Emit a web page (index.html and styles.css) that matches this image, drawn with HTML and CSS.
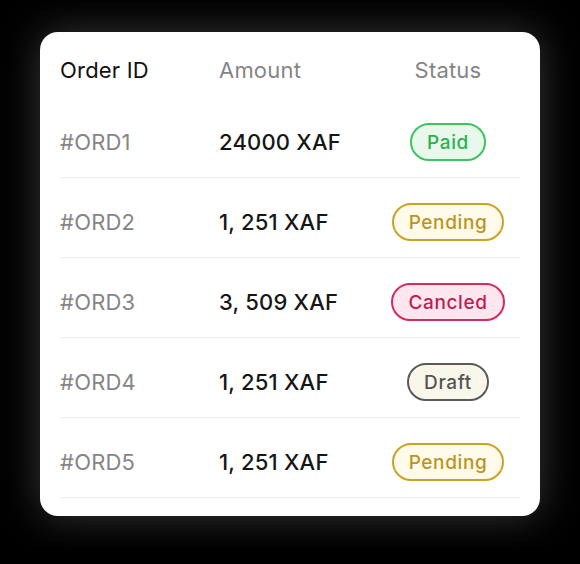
FILE: index.html
```html
<!DOCTYPE html>
<html lang="en">
<head>
    <meta charset="UTF-8">
    <meta name="viewport" content="width=device-width, initial-scale=1.0">
    <title>Orders</title>
    <link rel="stylesheet" href="styles.css">
</head>
<body>
    <div class="card">
        <div class="row head">
            <span class="id-head">Order ID</span>
            <span class="muted">Amount</span>
            <span class="muted center">Status</span>
        </div>
        <div class="row">
            <span class="muted">#ORD1</span>
            <span class="amount">24000 XAF</span>
            <span class="center"><span class="badge paid">Paid</span></span>
        </div>
        <div class="row">
            <span class="muted">#ORD2</span>
            <span class="amount">1, 251 XAF</span>
            <span class="center"><span class="badge pending">Pending</span></span>
        </div>
        <div class="row">
            <span class="muted">#ORD3</span>
            <span class="amount">3, 509 XAF</span>
            <span class="center"><span class="badge cancled">Cancled</span></span>
        </div>
        <div class="row">
            <span class="muted">#ORD4</span>
            <span class="amount">1, 251 XAF</span>
            <span class="center"><span class="badge draft">Draft</span></span>
        </div>
        <div class="row">
            <span class="muted">#ORD5</span>
            <span class="amount">1, 251 XAF</span>
            <span class="center"><span class="badge pending">Pending</span></span>
        </div>
    </div>
</body>
</html>
```

FILE: styles.css
```css
body {
    font-family: Inter, "Noto Sans", sans-serif;
    background-color: #000;
    margin: 0;
    padding: 32px 40px;
}

.card {
    background-color: #fff;
    width: 460px;
    padding: 0 20px 18px;
    border-radius: 18px;
    box-shadow: 0 0 40px rgba(255, 255, 255, 0.22);
}

.row {
    display: grid;
    grid-template-columns: 159px 157px 144px;
    align-items: center;
    padding: 25px 0 16px;
    border-bottom: 1px solid #ececec;
    font-size: 22px;
    line-height: 38px;
    letter-spacing: 0.2px;
}

.row.head {
    padding: 24px 0 14px;
    line-height: 28px;
    border-bottom: none;
}

.id-head {
    color: #111;
}

.muted {
    color: #858585;
}

.amount {
    color: #161616;
    font-weight: 500;
}

.center {
    display: flex;
    justify-content: center;
}

.badge {
    box-sizing: border-box;
    height: 38px;
    line-height: 35px;
    padding: 0 15px;
    border: 2px solid;
    border-radius: 19px;
    font-size: 19px;
    font-weight: 500;
    letter-spacing: 0.6px;
}

.paid {
    color: #2eb14c;
    border-color: #3ec45c;
    background-color: #e8f8ec;
}

.pending {
    color: #b8951c;
    border-color: #c9a22a;
    background-color: #fffaea;
}

.cancled {
    color: #c21c50;
    border-color: #d42c5c;
    background-color: #fde6ed;
}

.draft {
    color: #555;
    border-color: #5a5a5a;
    background-color: #f8f7ea;
}
```
